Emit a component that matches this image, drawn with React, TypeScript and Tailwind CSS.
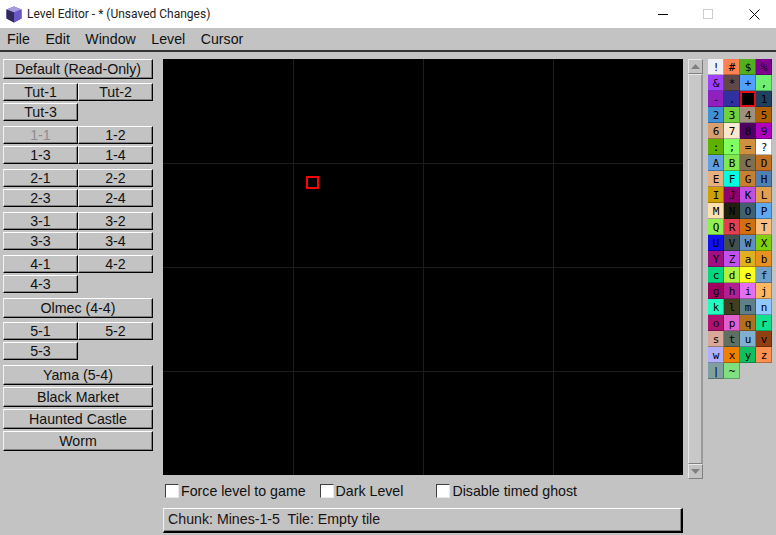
const sans = "font-['Liberation_Sans',Arial,sans-serif]";

const bevel =
  "border border-t-white border-l-[#f0f0f0] border-b-black border-r-black bg-[#c3c3c3] shadow-[inset_-1px_-1px_0_#808080]";

function Btn({ label, tall, disabled }: { label: string; tall?: boolean; disabled?: boolean }) {
  return (
    <div
      className={`${bevel} flex items-center justify-center text-[14.2px] leading-none ${tall ? "h-5" : "h-[18px]"} ${
        disabled ? "text-[#8e8e8e]" : "text-[#111]"
      }`}
    >
      {label}
    </div>
  );
}

function Pair({ items, disabledFirst }: { items: string[]; disabledFirst?: boolean }) {
  return (
    <div className="grid grid-cols-2 gap-y-[2px]">
      {items.map((s, i) => (
        <Btn key={s} label={s} disabled={disabledFirst && i === 0} />
      ))}
    </div>
  );
}

const palette: [string, string][] = [
  ["!", "#f0f0f5"], ["#", "#ff8050"], ["$", "#50b020"], ["%", "#800090"],
  ["&", "#a040ff"], ["*", "#604848"], ["+", "#50a0ff"], [",", "#70f070"],
  ["-", "#9020c0"], [".", "#3030a0"], ["", "#000000"], ["1", "#204060"],
  ["2", "#4090d8"], ["3", "#70d040"], ["4", "#a09080"], ["5", "#b06000"],
  ["6", "#d8a070"], ["7", "#fbe8d0"], ["8", "#500060"], ["9", "#b000c0"],
  [":", "#60b000"], [";", "#80ff60"], ["=", "#d09040"], ["?", "#ffffff"],
  ["A", "#60a0e0"], ["B", "#80e850"], ["C", "#807050"], ["D", "#c07020"],
  ["E", "#e8b080"], ["F", "#00ffe0"], ["G", "#c88030"], ["H", "#5080b0"],
  ["I", "#d0a000"], ["J", "#900070"], ["K", "#c050e0"], ["L", "#e0a050"],
  ["M", "#ffe0b0"], ["N", "#202010"], ["O", "#406070"], ["P", "#60a8f0"],
  ["Q", "#90f050"], ["R", "#e04050"], ["S", "#d07010"], ["T", "#f8c080"],
  ["U", "#1010f0"], ["V", "#405050"], ["W", "#6090c0"], ["X", "#80d010"],
  ["Y", "#a01080"], ["Z", "#c050f0"], ["a", "#e0b020"], ["b", "#e89020"],
  ["c", "#00d880"], ["d", "#b0f040"], ["e", "#ffff20"], ["f", "#70a0c8"],
  ["g", "#a00060"], ["h", "#b02090"], ["i", "#e070f0"], ["j", "#ffb860"],
  ["k", "#20ffc0"], ["l", "#404020"], ["m", "#608088"], ["n", "#90c8ff"],
  ["o", "#b01070"], ["p", "#e060d0"], ["q", "#b07020"], ["r", "#10e090"],
  ["s", "#d8a898"], ["t", "#607060"], ["u", "#80b0d0"], ["v", "#904010"],
  ["w", "#b0b0ff"], ["x", "#f08000"], ["y", "#10c060"], ["z", "#ff9050"],
  ["|", "#80a0a0"], ["~", "#80e080"],
];

function Check({ label, className }: { label: string; className?: string }) {
  return (
    <div className={`flex items-center gap-[2px] ${className ?? ""}`}>
      <span className="h-[14px] w-[14px] border border-t-[#404040] border-l-[#404040] border-b-[#e8e8e8] border-r-[#e8e8e8] bg-white" />
      <span className="text-[14.2px] leading-none text-[#111]">{label}</span>
    </div>
  );
}

export default function App() {
  return (
    <div className={`${sans} h-[535px] w-[776px] overflow-hidden bg-[#c3c3c3]`}>
      {/* title bar */}
      <div className="flex h-7 items-center bg-white">
        <svg width="16" height="17" viewBox="0 0 16 17" className="ml-[6px]">
          <path d="M8 0.5 L15.5 3.5 L15.5 12.5 L8 16.5 L0.5 12.5 L0.5 3.5 Z" fill="#4b3f8f" />
          <path d="M8 0.5 L15.5 3.5 L8 6.5 L0.5 3.5 Z" fill="#a89ae0" />
          <path d="M8 6.5 L15.5 3.5 L15.5 12.5 L8 16.5 Z" fill="#6a56c4" />
          <path d="M0.5 3.5 L8 6.5 L8 16.5 L0.5 12.5 Z" fill="#2f2a5c" />
        </svg>
        <span className="ml-[5px] font-['Roboto',sans-serif] text-[12px] text-[#222]">
          Level Editor - * (Unsaved Changes)
        </span>
        <div className="ml-auto flex items-center pr-[16px]">
          <span className="h-px w-[10px] bg-black" />
          <span className="ml-[35px] h-[10px] w-[10px] border border-[#cccccc]" />
          <svg width="11" height="11" viewBox="0 0 11 11" className="ml-[36px]">
            <path d="M0.5 0.5 L10.5 10.5 M10.5 0.5 L0.5 10.5" stroke="#111" strokeWidth="1" />
          </svg>
        </div>
      </div>

      {/* menu */}
      <div className="flex h-6 items-center gap-[15.5px] border-b-2 border-[#333] px-[7px] pt-[1px] text-[14.2px] text-[#111]">
        <span>File</span>
        <span>Edit</span>
        <span>Window</span>
        <span>Level</span>
        <span>Cursor</span>
      </div>

      <div className="flex pl-[3px] pt-[7px]">
        {/* level list */}
        <div className="flex w-[150px] flex-col">
          <Btn label="Default (Read-Only)" tall />
          <div className="mt-1">
            <Pair items={["Tut-1", "Tut-2", "Tut-3"]} />
          </div>
          <div className="mt-[5px]">
            <Pair items={["1-1", "1-2", "1-3", "1-4"]} disabledFirst />
          </div>
          <div className="mt-[5px]">
            <Pair items={["2-1", "2-2", "2-3", "2-4"]} />
          </div>
          <div className="mt-[5px]">
            <Pair items={["3-1", "3-2", "3-3", "3-4"]} />
          </div>
          <div className="mt-[5px]">
            <Pair items={["4-1", "4-2", "4-3"]} />
          </div>
          <div className="mt-[5px]">
            <Btn label="Olmec (4-4)" tall />
          </div>
          <div className="mt-1">
            <Pair items={["5-1", "5-2", "5-3"]} />
          </div>
          <div className="mt-[5px] flex flex-col gap-[2px]">
            <Btn label="Yama (5-4)" tall />
            <Btn label="Black Market" tall />
            <Btn label="Haunted Castle" tall />
            <Btn label="Worm" tall />
          </div>
        </div>

        {/* canvas and options */}
        <div className="ml-[10px] w-[520px]">
          <div className="relative grid h-[416px] grid-cols-[130px_130px_130px_130px] grid-rows-[104px_104px_104px_104px] bg-black">
            {Array.from({ length: 16 }).map((_, i) => (
              <div
                key={i}
                className={`${i % 4 !== 0 ? "border-l border-l-[#1c1c1c]" : ""} ${
                  i >= 4 ? "border-t border-t-[#1c1c1c]" : ""
                }`}
              />
            ))}
            <div className="absolute left-[143px] top-[117px] h-[13px] w-[13px] border-2 border-[#ff0000]" />
          </div>
          <div className="mt-[9px] flex h-[14px] pl-[2px]">
            <Check label="Force level to game" />
            <Check label="Dark Level" className="ml-[14px]" />
            <Check label="Disable timed ghost" className="ml-[33px]" />
          </div>
          <div
            className={`${bevel} mt-[10px] flex h-[25px] items-center whitespace-pre border-b-2 border-r-2 pl-[4px] text-[14.2px] text-[#221111]`}
          >
            {"Chunk: Mines-1-5  Tile: Empty tile"}
          </div>
        </div>

        {/* scrollbar */}
        <div className="ml-[5px] flex h-[420px] w-[15px] flex-col">
          <div className="flex h-[15px] items-center justify-center border border-t-[#e8e8e8] border-l-[#e8e8e8] border-b-[#808080] border-r-[#808080]">
            <svg width="9" height="5" viewBox="0 0 9 5">
              <path d="M4.5 0 L9 5 L0 5 Z" fill="#808080" />
            </svg>
          </div>
          <div className="flex-1 border-y border-b-[#808080] border-t-[#e8e8e8] border-l border-r-2 border-l-[#e8e8e8] border-r-[#9a9a9a] bg-[#c8c8c8]" />
          <div className="flex h-[15px] items-center justify-center border border-t-[#e8e8e8] border-l-[#e8e8e8] border-b-[#808080] border-r-[#808080]">
            <svg width="9" height="5" viewBox="0 0 9 5">
              <path d="M0 0 L9 0 L4.5 5 Z" fill="#808080" />
            </svg>
          </div>
        </div>

        {/* tile palette */}
        <div className="ml-[5px] grid h-fit w-16 grid-cols-[16px_16px_16px_16px] font-['DejaVu_Sans_Mono',monospace] text-[11px] leading-none text-black">
          {palette.map(([ch, color], i) => (
            <div
              key={i}
              style={{ backgroundColor: color }}
              className={`flex h-4 w-4 items-center justify-center ${
                ch === "" ? "border-2 border-[#e01010]" : "shadow-[inset_-1px_-1px_0_rgba(0,0,0,0.28)]"
              }`}
            >
              {ch}
            </div>
          ))}
        </div>
      </div>
    </div>
  );
}
